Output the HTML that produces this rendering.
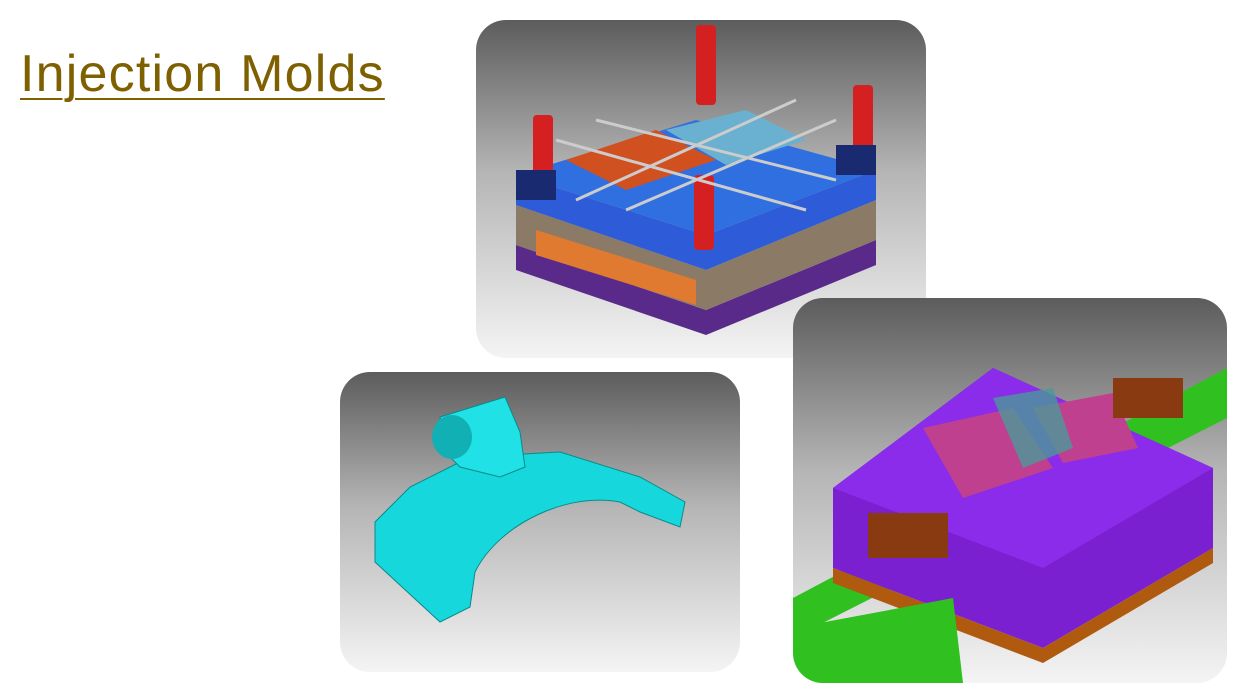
<!DOCTYPE html>
<html><head><style>
body{margin:0;width:1242px;height:700px;background:#fff;position:relative;overflow:hidden;font-family:"Liberation Sans",sans-serif}
.t{position:absolute;left:20px;top:44px;font-size:52px;color:#7f6000;text-decoration:underline;text-decoration-thickness:2px;text-underline-offset:7px;letter-spacing:1.2px}
.p{position:absolute;border-radius:30px;overflow:hidden;background:linear-gradient(#5c5c5c,#b5b5b5 45%,#f4f4f4)}
</style></head><body>
<div class="t">Injection Molds</div>

<div class="p" style="left:476px;top:20px;width:450px;height:338px">
<svg width="450" height="338">
<polygon points="40,250 230,315 400,245 400,220 230,290 40,225" fill="#5a2a8a"/>
<polygon points="40,225 230,290 400,220 400,180 230,250 40,185" fill="#8a7a66"/>
<polygon points="60,235 220,285 220,260 60,210" fill="#e07a30"/>
<polygon points="40,185 230,250 400,180 400,150 230,215 40,155" fill="#2e5cd8"/>
<polygon points="40,155 230,215 400,150 220,100" fill="#2f6fe0"/>
<polygon points="90,140 180,110 240,140 150,170" fill="#d05020"/>
<polygon points="190,110 270,90 330,120 250,145" fill="#6ab0d0"/>
<rect x="57" y="95" width="20" height="70" rx="4" fill="#d42020"/>
<rect x="220" y="5" width="20" height="80" rx="4" fill="#d42020"/>
<rect x="377" y="65" width="20" height="70" rx="4" fill="#d42020"/>
<rect x="218" y="155" width="20" height="75" rx="4" fill="#d42020"/>
<rect x="40" y="150" width="40" height="30" fill="#1a2a70"/>
<rect x="360" y="125" width="40" height="30" fill="#1a2a70"/>
<g stroke="#ccc" stroke-width="3"><line x1="80" y1="120" x2="330" y2="190"/><line x1="120" y1="100" x2="360" y2="160"/><line x1="100" y1="180" x2="320" y2="80"/><line x1="150" y1="190" x2="360" y2="100"/></g>
</svg></div>

<div class="p" style="left:340px;top:372px;width:400px;height:300px">
<svg width="400" height="300">
<path d="M35,150 L70,115 L130,85 L220,80 L300,105 L345,130 L340,155 L300,140 L280,130 C230,120 160,150 135,200 L130,235 L100,250 L35,190Z" fill="#16d8dc" stroke="#0a8a8a"/>
<path d="M100,45 L165,25 L180,60 L185,95 L160,105 L120,95 L105,80Z" fill="#20e2e6" stroke="#0a8a8a"/>
<ellipse cx="112" cy="65" rx="20" ry="22" fill="#10b0b4"/>
</svg></div>

<div class="p" style="left:793px;top:298px;width:434px;height:385px">
<svg width="434" height="385">
<polygon points="0,300 0,340 434,120 434,70" fill="#30c020"/>
<polygon points="40,190 40,270 250,350 420,250 420,170 200,70" fill="#7a20d0"/>
<polygon points="40,190 250,270 420,170 200,70" fill="#8a2cea"/>
<polygon points="40,270 250,350 420,250 420,265 250,365 40,285" fill="#b05a10"/>
<polygon points="0,330 0,385 170,385 160,300" fill="#30c020"/>
<polygon points="130,130 220,110 260,170 170,200" fill="#c04090"/>
<polygon points="240,110 320,95 345,150 270,165" fill="#c04090"/>
<polygon points="200,100 260,90 280,150 230,170" fill="#4a9a9a" opacity=".8"/>
<rect x="75" y="215" width="80" height="45" fill="#8a3a10"/>
<rect x="320" y="80" width="70" height="40" fill="#8a3a10"/>
</svg></div>
</body></html>
